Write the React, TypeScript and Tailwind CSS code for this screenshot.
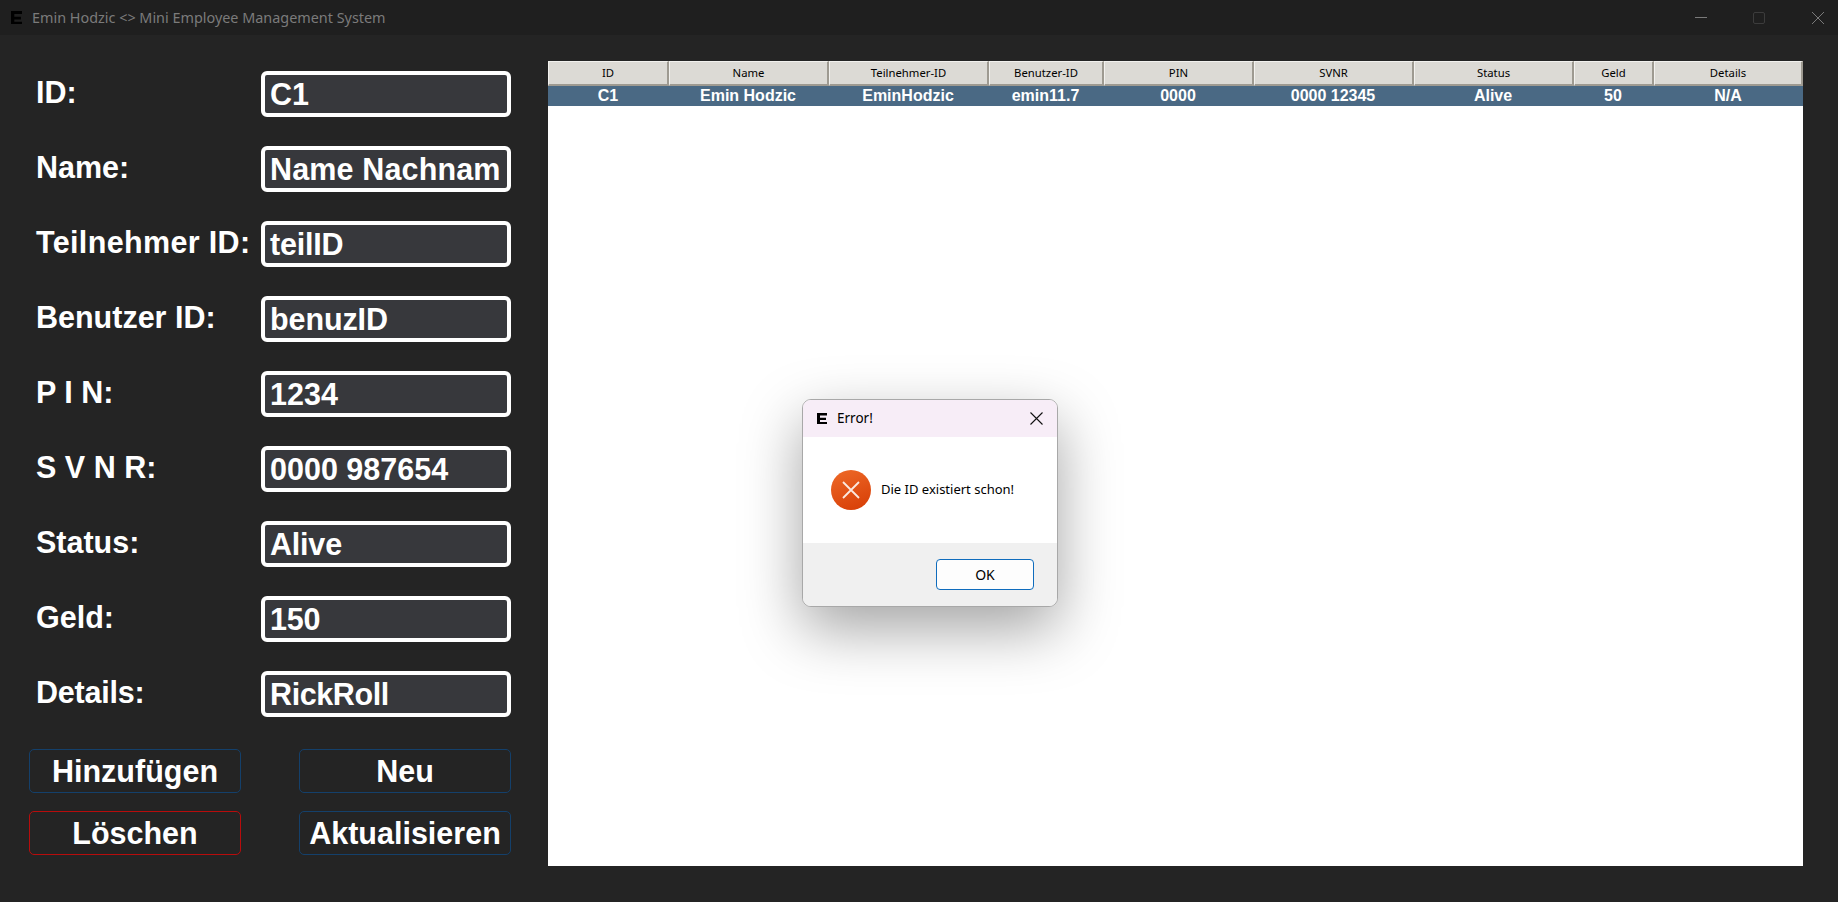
import React from "react";

const fields: [string, string, string, string][] = [
  ["ID:", "C1", "", ""],
  ["Name:", "Name Nachnam", "", "tracking-[0.15px]"],
  ["Teilnehmer ID:", "teilID", "tracking-[0.35px]", "tracking-[-0.2px]"],
  ["Benutzer ID:", "benuzID", "", "tracking-[-0.1px]"],
  ["P I N:", "1234", "", ""],
  ["S V N R:", "0000 987654", "", ""],
  ["Status:", "Alive", "", "tracking-[-0.2px]"],
  ["Geld:", "150", "", "tracking-[-0.2px]"],
  ["Details:", "RickRoll", "tracking-[-0.2px]", "tracking-[-0.4px]"],
];

const columns: [string, string, string, string][] = [
  ["ID", "C1", "w-[121px]", "w-[120px]"],
  ["Name", "Emin Hodzic", "w-[160px]", "w-[160px]"],
  ["Teilnehmer-ID", "EminHodzic", "w-[160px]", "w-[160px]"],
  ["Benutzer-ID", "emin11.7", "w-[115px]", "w-[115px]"],
  ["PIN", "0000", "w-[150px]", "w-[150px]"],
  ["SVNR", "0000 12345", "w-[160px]", "w-[160px]"],
  ["Status", "Alive", "w-[160px]", "w-[160px]"],
  ["Geld", "50", "w-[80px]", "w-[80px]"],
  ["Details", "N/A", "w-[149px]", "w-[150px]"],
];

function Logo({ className }: { className: string }) {
  return (
    <svg viewBox="1 1 10 10.4" preserveAspectRatio="none" className={className} fill="#000">
      <path d="M1 1h10v2.4H4v2.1h6v2.2H4v1.9h7V11.4H1z" />
    </svg>
  );
}

function ActionButton({ label, tone }: { label: string; tone: string }) {
  return (
    <div className={`h-[44px] w-[212px] pt-[1px] rounded-[5px] border flex items-center justify-center text-[30.5px] font-bold text-white ${tone}`}>
      {label}
    </div>
  );
}

export default function App() {
  return (
    <div className="relative w-[1838px] h-[902px] overflow-hidden bg-[#242424] flex flex-col font-['Liberation_Sans',sans-serif]">
      <div className="h-[35px] shrink-0 bg-[#1f1f1f] flex items-center pl-[11px]">
        <Logo className="w-[11px] h-[13px]" />
        <span className="ml-[10px] text-[14.4px] text-[#7b7b7b] font-['Noto_Sans',sans-serif] whitespace-nowrap">
          Emin Hodzic &lt;&gt; Mini Employee Management System
        </span>
        <div className="ml-auto flex items-center">
          <svg width="12" height="12" viewBox="0 0 12 12" className="mr-[46px]" stroke="#7a7a7a" fill="none">
            <path d="M0 5.5h12" />
          </svg>
          <svg width="12" height="12" viewBox="0 0 12 12" className="mr-[47px]" stroke="#3c3c3c" fill="none">
            <rect x="0.5" y="0.5" width="11" height="11" rx="1.5" />
          </svg>
          <svg width="12" height="12" viewBox="0 0 12 12" className="mr-[14px]" stroke="#7a7a7a" fill="none">
            <path d="M0 0l12 12M12 0L0 12" />
          </svg>
        </div>
      </div>

      <div className="flex flex-1 min-h-0 pt-[26px] pb-[36px]">
        <div className="w-[548px] shrink-0 pl-[29px] pr-[37px] flex flex-col">
          <div className="flex flex-col gap-[29px] pt-[10px]">
            {fields.map(([label, value, labelClass, valueClass]) => (
              <div key={label} className="flex h-[46px]">
                <div className={`w-[231px] pl-[7px] text-[30.5px] leading-[43px] font-bold text-white whitespace-nowrap ${labelClass}`}>
                  {label}
                </div>
                <div className={`w-[250px] h-[46px] ml-auto rounded-[6px] border-[4px] border-white bg-[#37383c] pl-[5px] text-[30.5px] leading-[38px] font-bold text-white overflow-hidden whitespace-nowrap ${valueClass}`}>
                  {value}
                </div>
              </div>
            ))}
          </div>
          <div className="mt-[32px] grid grid-cols-[212px_212px] justify-between gap-y-[18px]">
            <ActionButton label="Hinzufügen" tone="border-[#14406b]" />
            <ActionButton label="Neu" tone="border-[#14406b]" />
            <ActionButton label="Löschen" tone="border-[#b80c0c]" />
            <ActionButton label="Aktualisieren" tone="border-[#14406b]" />
          </div>
        </div>

        <div className="w-[1255px] bg-white">
          <div className="flex h-[25px]">
            {columns.map(([head, , w]) => (
              <div
                key={head}
                className={`${w} shrink-0 bg-[#dcdad5] border border-t-[#f2f1ee] border-l-[#f2f1ee] border-r-[#9e9a91] border-b-[#9e9a91] border-r-2 border-b-2 flex items-center justify-center text-[11.3px] text-black font-['Noto_Sans',sans-serif]`}
              >
                {head}
              </div>
            ))}
          </div>
          <div className="flex h-[20px] bg-[#4a6984]">
            {columns.map(([head, cell, , w]) => (
              <div key={head} className={`${w} shrink-0 flex items-center justify-center text-[16px] font-bold text-white`}>
                {cell}
              </div>
            ))}
          </div>
        </div>
      </div>

      <div className="absolute left-[802px] top-[399px] w-[256px] h-[208px] rounded-[9px] border border-[#a8a8a8] bg-white flex flex-col overflow-hidden font-['Noto_Sans',sans-serif] text-black shadow-[0_22px_60px_rgba(0,0,0,0.36)]">
        <div className="h-[37px] shrink-0 bg-[#f7edf7] flex items-center pl-[14px] pr-[14px]">
          <Logo className="w-[10px] h-[11px]" />
          <span className="ml-[10px] text-[13.5px]">Error!</span>
          <svg width="13" height="13" viewBox="0 0 13 13" className="ml-auto" stroke="#111" strokeWidth="1.1" fill="none">
            <path d="M0.5 0.5l12 12M12.5 0.5l-12 12" />
          </svg>
        </div>
        <div className="flex-1 flex items-center pl-[28px]">
          <div className="w-[40px] h-[40px] rounded-full bg-[linear-gradient(160deg,#ee6a28,#d63c05)] flex items-center justify-center">
            <svg width="18" height="18" viewBox="0 0 18 18" stroke="#fbe9e0" strokeWidth="1.8" fill="none">
              <path d="M1 1l16 16M17 1L1 17" />
            </svg>
          </div>
          <span className="ml-[10px] text-[13px]">Die ID existiert schon!</span>
        </div>
        <div className="h-[63px] shrink-0 bg-[#f0f0f0] flex items-center justify-end pr-[23px]">
          <div className="w-[98px] h-[31px] rounded-[4px] border border-[#0f6cbd] bg-[#fdfdfd] flex items-center justify-center text-[14px]">
            OK
          </div>
        </div>
      </div>
    </div>
  );
}
